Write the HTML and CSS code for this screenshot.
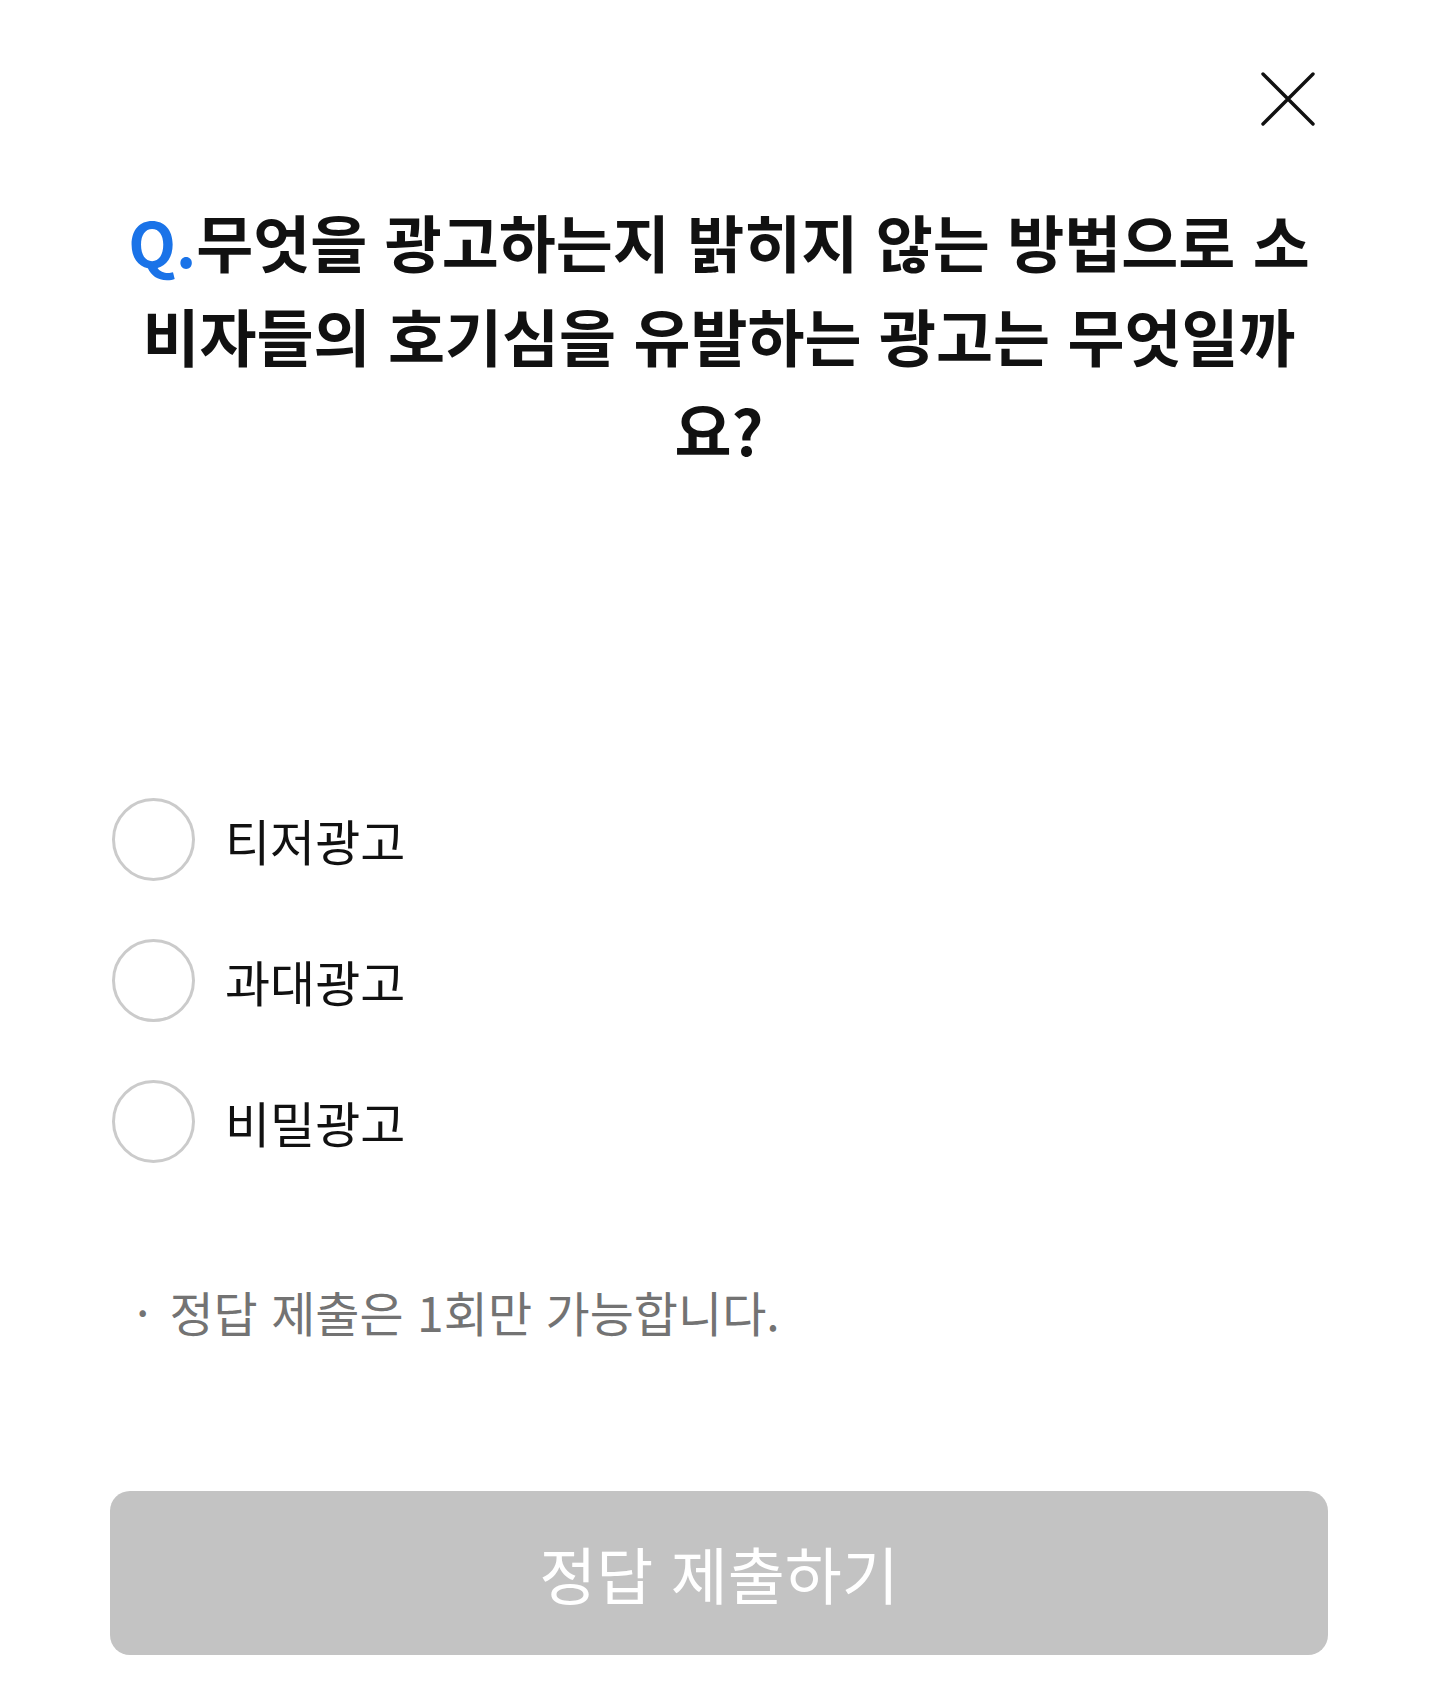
FILE: index.html
```html
<!DOCTYPE html>
<html lang="ko">
<head>
    <meta charset="utf-8">
    <link rel="stylesheet" href="styles.css">
</head>
<body>
    <div class="quiz-popup">
        <div class="quiz-header">
            <button class="close-btn" aria-label="닫기">
                <svg width="54" height="54" viewBox="0 0 54 54">
                    <path d="M2 2 L52 52 M52 2 L2 52" stroke="#111" stroke-width="3.4" stroke-linecap="round" fill="none"/>
                </svg>
            </button>
        </div>

        <h2 class="question"><span class="q-mark">Q.</span>무엇을 광고하는지 밝히지 않는 방법으로 소비자들의 호기심을 유발하는 광고는 무엇일까요?</h2>

        <div class="options">
            <label class="option">
                <input type="radio" name="answer" value="1">
                <span class="circle"></span>
                <span class="option-text">티저광고</span>
            </label>
            <label class="option">
                <input type="radio" name="answer" value="2">
                <span class="circle"></span>
                <span class="option-text">과대광고</span>
            </label>
            <label class="option">
                <input type="radio" name="answer" value="3">
                <span class="circle"></span>
                <span class="option-text">비밀광고</span>
            </label>
        </div>

        <p class="notice"><span class="dot">·</span>정답 제출은 1회만 가능합니다.</p>

        <button class="submit-btn" disabled>정답 제출하기</button>
    </div>
</body>
</html>
```

FILE: styles.css
```css
body {
    margin: 0;
    padding: 0;
    background: #fff;
    font-family: "Noto Sans CJK KR", "Noto Sans", sans-serif;
    color: #111;
}
.quiz-popup {
    width: 1218px;
    margin: 0 auto;
    display: flex;
    flex-direction: column;
}
.quiz-header {
    display: flex;
    justify-content: flex-end;
    padding-top: 72px;
    padding-right: 13px;
}
.close-btn {
    background: none;
    border: none;
    padding: 0;
    width: 54px;
    height: 54px;
    cursor: pointer;
}
.close-btn svg {
    display: block;
}
.question {
    margin: 68px 0 0;
    padding: 0 12px;
    font-size: 62px;
    font-weight: 700;
    line-height: 94px;
    text-align: center;
}
.q-mark {
    color: #1a73e8;
}
.options {
    margin-top: 322px;
    display: flex;
    flex-direction: column;
    gap: 58px;
}
.option {
    display: flex;
    align-items: center;
    gap: 30px;
    padding-left: 2px;
    cursor: pointer;
}
.option input {
    display: none;
}
.circle {
    width: 77px;
    height: 77px;
    border: 3px solid #cbcbcb;
    border-radius: 50%;
    flex-shrink: 0;
}
.option input:checked + .circle {
    border-color: #1a73e8;
    border-width: 22px;
    width: 39px;
    height: 39px;
}
.option-text {
    font-size: 49px;
    line-height: 60px;
    color: #111;
}
.notice {
    margin: 118px 0 0;
    padding-left: 26px;
    font-size: 48px;
    line-height: 60px;
    color: #737373;
}
.notice .dot {
    margin-right: 20px;
}
.submit-btn {
    margin-top: 150px;
    height: 164px;
    border: none;
    border-radius: 20px;
    background: #c3c3c3;
    color: #fff;
    font-family: "Noto Sans CJK KR", "Noto Sans", sans-serif;
    font-size: 62px;
    font-weight: 400;
}
```
